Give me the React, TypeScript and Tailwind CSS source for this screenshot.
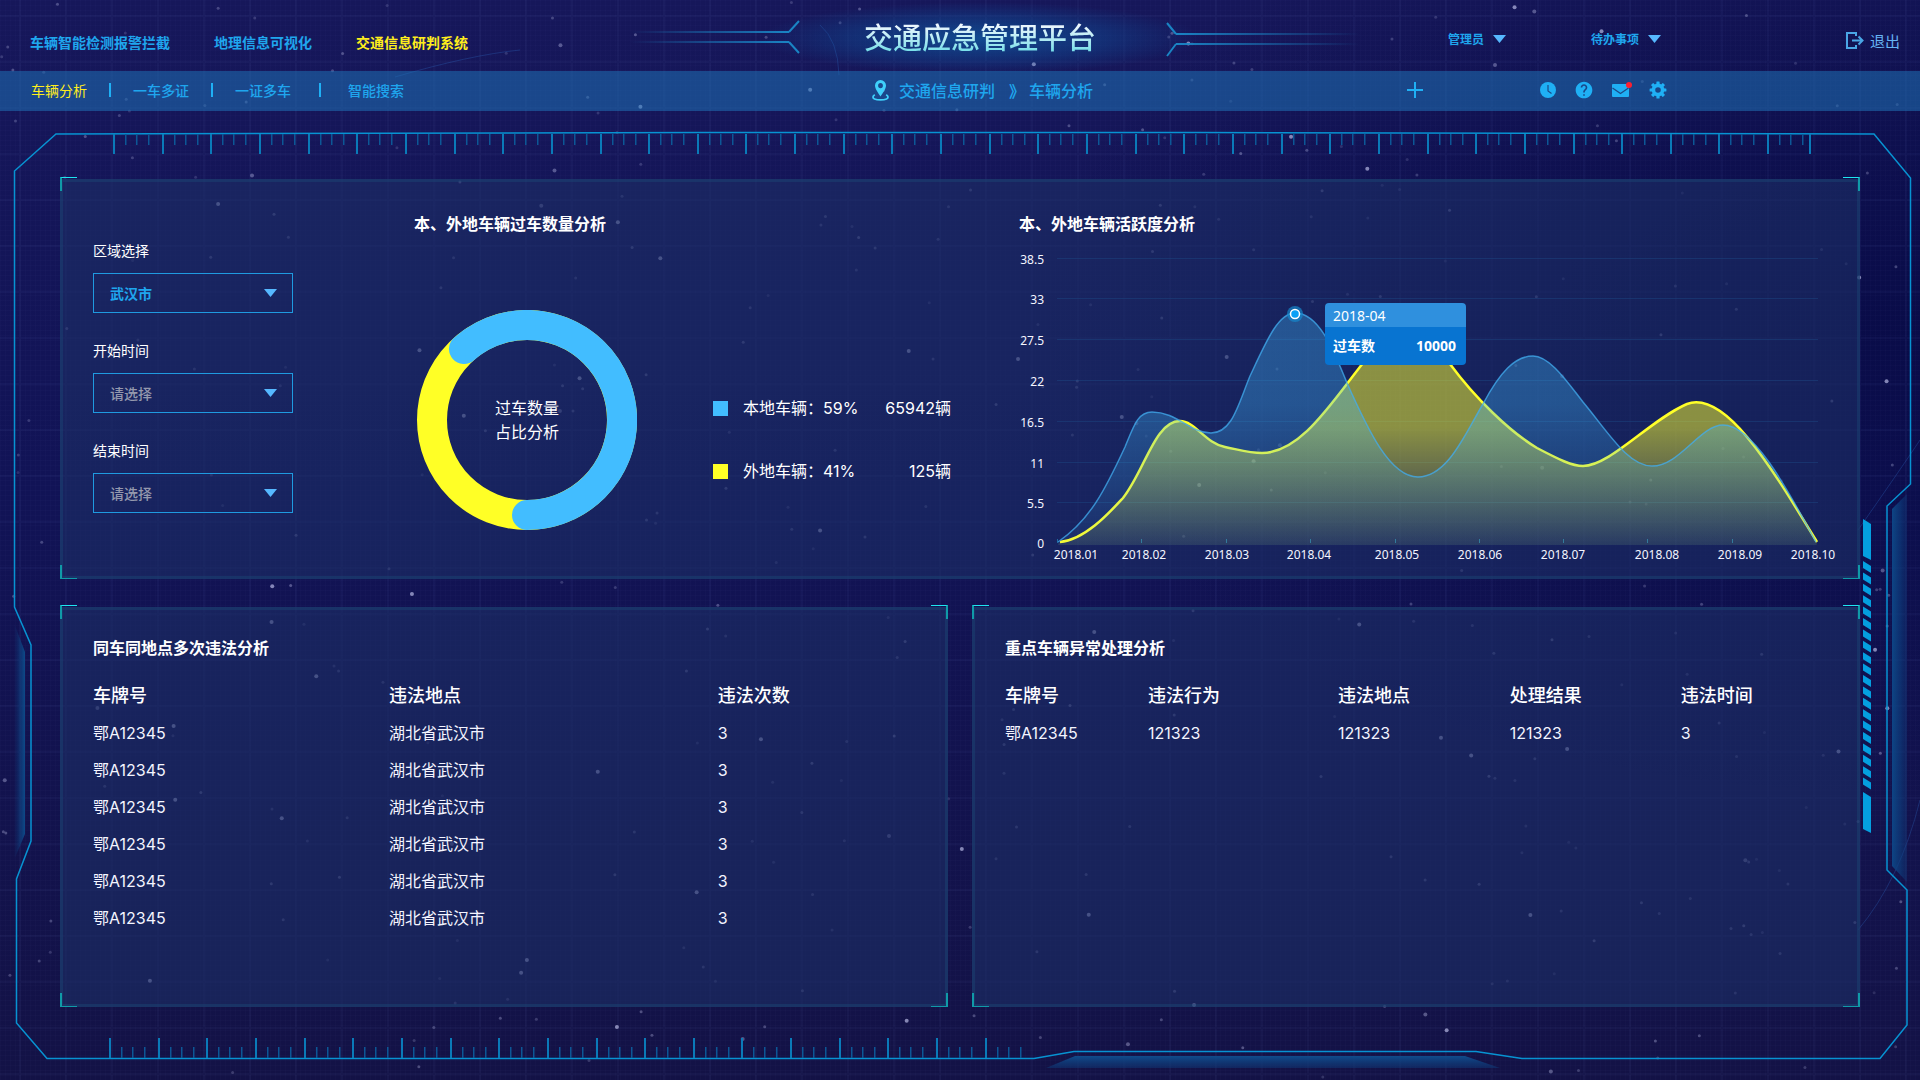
import React from "react";
import { MdHelp } from "react-icons/md";

/* ---------- background ---------- */

type Star = { x: number; y: number; r: number; o: number };

const stars: Star[] = (() => {
  let seed = 20180401;
  const next = () => {
    seed = (seed * 1664525 + 1013904223) % 4294967296;
    return seed / 4294967296;
  };
  return Array.from({ length: 420 }, () => {
    const x = next() * 1920;
    const y = next() * 1080;
    const k = next();
    return { x, y, r: k > 0.8 ? 2 : 1.5, o: k > 0.85 ? 0.65 : 0.15 + k * 0.28 };
  });
})();

const range = (n: number) => Array.from({ length: n }, (_, i) => i);

function Ticks({ x0, groups, base, dir, tail }: { x0: number; groups: number; base: number; dir: number; tail?: number }) {
  const long = range(groups).map((i) => x0 + Math.round(i * 48.65));
  return (
    <g>
      {long.map((x) => (
        <g key={x}>
          <rect x={x - 1} y={dir > 0 ? base : base - 20} width="2" height="20" fill="#0a7ab8" />
          {[12, 23, 35].map((d) => (
            <rect key={d} x={x + d - 1} y={dir > 0 ? base : base - 11} width="1.5" height="11" fill="#0c5796" />
          ))}
        </g>
      ))}
      {tail ? <rect x={tail - 1} y={base} width="2" height="20" fill="#0a7ab8" /> : null}
    </g>
  );
}

function Backdrop() {
  return (
    <svg
      aria-hidden="true"
      className="pointer-events-none absolute inset-0 h-full w-full"
      viewBox="0 0 1920 1080"
      preserveAspectRatio="none"
    >
      <defs>
        <linearGradient id="sky" x1="0" y1="0" x2="0" y2="1">
          <stop offset="0" stopColor="#16175a" />
          <stop offset="0.45" stopColor="#111356" />
          <stop offset="1" stopColor="#131246" />
        </linearGradient>
        <radialGradient id="shade" cx="0.98" cy="0.3" r="0.45">
          <stop offset="0" stopColor="#050842" stopOpacity="0.7" />
          <stop offset="1" stopColor="#050842" stopOpacity="0" />
        </radialGradient>
        <pattern id="grid" x="19" y="15" width="46" height="46" patternUnits="userSpaceOnUse">
          <path d="M1 0V46M0 1H46" stroke="#6f86d8" strokeOpacity="0.05" strokeWidth="2" fill="none" />
        </pattern>
        <pattern id="fine" width="5" height="5" patternUnits="userSpaceOnUse">
          <path d="M0.5 0V5M0 0.5H5" stroke="#6f86d8" strokeOpacity="0.025" fill="none" />
        </pattern>
        <radialGradient id="glow">
          <stop offset="0" stopColor="#0f62a8" stopOpacity="0.7" />
          <stop offset="0.6" stopColor="#0f55a0" stopOpacity="0.35" />
          <stop offset="1" stopColor="#0f55a0" stopOpacity="0" />
        </radialGradient>
        <linearGradient id="railL" gradientUnits="userSpaceOnUse" x1="630" y1="0" x2="789" y2="0">
          <stop offset="0" stopColor="#1a80c0" stopOpacity="0" />
          <stop offset="1" stopColor="#1a84c4" />
        </linearGradient>
        <linearGradient id="railR" gradientUnits="userSpaceOnUse" x1="1176" y1="0" x2="1360" y2="0">
          <stop offset="0" stopColor="#1a84c4" />
          <stop offset="1" stopColor="#1a80c0" stopOpacity="0" />
        </linearGradient>
        <linearGradient id="wingR" x1="0" y1="0" x2="1" y2="0">
          <stop offset="0" stopColor="#0d4585" />
          <stop offset="1" stopColor="#0d3f80" stopOpacity="0.3" />
        </linearGradient>
        <linearGradient id="wingL" x1="0" y1="0" x2="1" y2="0">
          <stop offset="0" stopColor="#0d3f80" stopOpacity="0" />
          <stop offset="1" stopColor="#0d4a88" />
        </linearGradient>
        <linearGradient id="wingB" x1="0" y1="0" x2="0" y2="1">
          <stop offset="0" stopColor="#0f4c8c" />
          <stop offset="1" stopColor="#0f3a78" stopOpacity="0.5" />
        </linearGradient>
      </defs>
      <rect width="1920" height="1080" fill="url(#sky)" />
      <rect width="1920" height="1080" fill="url(#shade)" />
      <rect width="1920" height="1080" fill="url(#fine)" />
      <rect width="1920" height="1080" fill="url(#grid)" />
      {stars.map((s, i) => (
        <circle key={i} cx={s.x} cy={s.y} r={s.r} fill="#c3c5ee" opacity={s.o} />
      ))}
      <path
        d="M395 77Q470 55 520 50M1858 530Q1900 470 1920 440M1858 930Q1900 880 1920 800M820 25Q838 40 839 75"
        fill="none"
        stroke="#2a62b8"
        strokeOpacity="0.35"
      />

      <ellipse cx="980" cy="38" rx="220" ry="36" fill="url(#glow)" />
      <path d="M630 31H789V33H630ZM630 41H789V43H630Z" fill="url(#railL)" />
      <path d="M789 32L799 21M789 42L799 53" stroke="#1a84c4" strokeWidth="2" />
      <path d="M1176 33H1360V35H1176ZM1176 43H1360V45H1176Z" fill="url(#railR)" />
      <path d="M1176 34L1167 23M1176 44L1167 56" stroke="#1a84c4" strokeWidth="2" />

      <path
        d="M56 134L700 132.5H1200L1874 134L1910.5 178V484L1887 506V870L1907 890V1025L1880 1058.5H1522L1476 1051.5H1074L1034 1058.5H47L16.5 1023V879L31 841V645L14.5 607V171Z"
        fill="none"
        stroke="#0793d2"
        strokeWidth="1.5"
      />
      <Ticks x0={114} groups={35} base={134} dir={1} tail={1810} />
      <Ticks x0={110} groups={19} base={1058} dir={-1} />

      <path d="M1892 509L1907 494V882L1892 866Z" fill="url(#wingR)" />
      <path d="M14 623L25 652V834L14 860Z" fill="url(#wingL)" />
      <path d="M1046 1068L1075 1056H1465L1500 1068Z" fill="url(#wingB)" />

      <g fill="#049fe0">
        <path d="M1863 519L1871 524V560L1863 556Z" />
        <path d="M1863 792L1871 797V833L1863 829Z" />
        {range(20).map((i) => {
          const y = 561 + i * 11.4;
          return <path key={i} d={`M1863 ${y}l8 5v7l-8 -5z`} />;
        })}
      </g>
    </svg>
  );
}

/* ---------- shared pieces ---------- */

function Caret() {
  return (
    <svg aria-hidden="true" width="13" height="8" viewBox="0 0 13 8">
      <path d="M0 0H13L6.5 8Z" fill="#56b8ff" />
    </svg>
  );
}

function Panel({ children, className }: { children: React.ReactNode; className: string }) {
  return (
    <section className={`relative min-h-[400px] border-[3px] border-[#1b4a78]/40 bg-[#1d2e66]/60 ${className}`}>
      <i className="absolute -left-[3px] -top-[5px] h-3.5 w-[17px] border-l-2 border-t border-l-[#109aa8] border-t-[#1fe6f0]" />
      <i className="absolute -right-[3px] -top-[5px] h-3.5 w-[17px] border-r-2 border-t border-r-[#109aa8] border-t-[#1fe6f0]" />
      <i className="absolute -bottom-[3px] -left-[3px] h-3.5 w-[17px] border-b border-l-2 border-[#109aa8]" />
      <i className="absolute -bottom-[3px] -right-[3px] h-3.5 w-[17px] border-b border-r-2 border-[#109aa8]" />
      {children}
    </section>
  );
}

/* ---------- header ---------- */

function Header() {
  return (
    <header className="relative">
      <div className="grid h-[71px] grid-cols-[865fr_230fr_825fr] items-center">
        <nav aria-label="系统" className="flex gap-11 pl-[30px] pt-3 text-sm font-bold text-[#1fa6ee]">
          <a href="#detect">车辆智能检测报警拦截</a>
          <a href="#gis">地理信息可视化</a>
          <a href="#judge" aria-current="page" className="text-[#ffee1c]">
            交通信息研判系统
          </a>
        </nav>
        <h1 className="whitespace-nowrap bg-gradient-to-b from-[#f2f8ff] from-20% to-[#7be0ea] to-85% bg-clip-text text-[29px] font-medium leading-10 text-transparent">
          交通应急管理平台
        </h1>
        <div className="flex items-center gap-[85px] pl-88 pr-5 pt-2 text-xs font-bold text-[#1fa6ee]">
          <button type="button" className="flex items-center gap-[9px]">
            管理员
            <Caret />
          </button>
          <button type="button" className="flex items-center gap-[9px]">
            待办事项
            <Caret />
          </button>
          <button type="button" className="ml-auto flex items-center gap-1.5 pt-0.5 text-[15px] font-normal text-[#66b4f4]">
            <svg aria-hidden="true" width="18" height="17" viewBox="0 0 18 17" fill="none" stroke="#4aa6e6" strokeWidth="2">
              <path d="M10 4V1H1V16H10V13M6 8.5H16.5M12.5 4.5L16.5 8.5L12.5 12.5" />
            </svg>
            退出
          </button>
        </div>
      </div>

      <div className="grid h-10 grid-cols-[865fr_230fr_825fr] items-center bg-[#1f71b4]/55 pb-0.5">
        <nav aria-label="功能" className="grid grid-cols-[102px_102px_113px_auto] justify-start pl-[31px] text-sm text-[#1fa6ee]">
          {["车辆分析", "一车多证", "一证多车", "智能搜索"].map((t, i) => (
            <div key={t} className="flex items-center">
              <a href={`#tab-${i + 1}`} className={i === 0 ? "text-[#ffee1c]" : "font-medium"}>
                {t}
              </a>
              {i < 3 && (
                <span className="flex flex-1 justify-center">
                  <span className="h-3.5 w-0.5 bg-[#1fb0f5]" />
                </span>
              )}
            </div>
          ))}
        </nav>
        <nav aria-label="当前位置" className="flex items-center pl-[7px] text-base font-medium text-[#1fa6ee]">
          <svg aria-hidden="true" width="17" height="21" viewBox="0 0 17 21" className="mr-2.5 shrink-0">
            <path
              fill="#3fd0fb"
              fillRule="evenodd"
              d="M8.5 0A5.5 5.5 0 0 0 3 5.6C3 9 6.5 13.5 8.5 16.5C10.5 13.5 14 9 14 5.6A5.5 5.5 0 0 0 8.5 0ZM8.5 3A2.4 2.6 0 0 1 8.5 8.2A2.4 2.6 0 0 1 8.5 3Z"
            />
            <path
              d="M2.8 14.8C1.5 15.6 1 16.2 1 17C1 18.8 4.5 19.9 8.5 19.9S16 18.8 16 17C16 16.2 15.5 15.6 14.2 14.8"
              fill="none"
              stroke="#3fd0fb"
              strokeWidth="1.8"
            />
          </svg>
          <a href="#judge" className="whitespace-nowrap">
            交通信息研判
          </a>
          <span className="ml-3.5 w-5 font-bold">》</span>
          <a href="#tab-1" className="whitespace-nowrap">
            车辆分析
          </a>
        </nav>
        <div className="flex items-center gap-5 pl-[312px] text-[#1fb0f5]">
          <button type="button" aria-label="新增" className="mr-[97px]">
            <svg width="16" height="16" viewBox="0 0 16 16" stroke="currentColor" strokeWidth="2">
              <path d="M8 0V16M0 8H16" />
            </svg>
          </button>
          <button type="button" aria-label="时间">
            <svg width="16" height="16" viewBox="0 0 16 16">
              <circle cx="8" cy="8" r="8" fill="currentColor" />
              <path d="M8 3V9L11.5 11.5" fill="none" stroke="#1c4a88" strokeWidth="1.2" />
            </svg>
          </button>
          <button type="button" aria-label="帮助">
            <MdHelp className="-m-0.5" size={20} />
          </button>
          <button type="button" aria-label="消息" className="relative">
            <svg width="17" height="13" viewBox="0 0 17 13">
              <rect width="17" height="13" rx="1" fill="currentColor" />
              <path d="M0.5 4L8.5 9.5L16.5 4" fill="none" stroke="#1c4a88" strokeWidth="1.3" />
            </svg>
            <span className="absolute -right-[3px] -top-0.5 size-1.5 rounded-full bg-[#ff1f2f]" />
          </button>
          <button type="button" aria-label="设置">
            <svg width="18" height="18" viewBox="0 0 18 18">
              <path
                fill="currentColor"
                fillRule="evenodd"
                d="M9 2.6A6.4 6.4 0 0 1 9 15.4A6.4 6.4 0 0 1 9 2.6ZM9 6.2A2.8 2.8 0 0 0 9 11.8A2.8 2.8 0 0 0 9 6.2Z"
              />
              {range(8).map((i) => (
                <rect key={i} x="7.4" y="0.6" width="3.2" height="3.4" rx="0.5" fill="currentColor" transform={`rotate(${i * 45} 9 9)`} />
              ))}
            </svg>
          </button>
        </div>
      </div>
    </header>
  );
}

/* ---------- filters ---------- */

function Field({ id, label, options, picked }: { id: string; label: string; options: string[]; picked?: boolean }) {
  return (
    <div className="w-[200px]">
      <label htmlFor={id} className="block text-sm leading-5">
        {label}
      </label>
      <div className="relative mt-[13px]">
        <select
          id={id}
          className={`block h-10 w-full appearance-none border border-[#1f9ae0] bg-transparent pl-4 pr-8 text-sm outline-none ${
            picked ? "font-bold text-[#1fa6ee]" : "font-medium text-[#9498ad]"
          }`}
        >
          {options.map((o) => (
            <option key={o} className="bg-[#19235f]">
              {o}
            </option>
          ))}
        </select>
        <span className="pointer-events-none absolute inset-y-0 right-4 flex items-center">
          <Caret />
        </span>
      </div>
    </div>
  );
}

/* ---------- donut ---------- */

const shares = [
  { name: "本地车辆：", pct: "59%", count: "65942", swatch: "bg-[#42bdff]" },
  { name: "外地车辆：", pct: "41%", count: "125", swatch: "bg-[#ffff26]" },
];

function Donut() {
  return (
    <div className="relative size-[220px] shrink-0">
      <svg viewBox="0 0 220 220" className="size-full" role="img" aria-label="过车数量占比">
        <circle cx="110" cy="110" r="95" fill="none" stroke="#ffff26" strokeWidth="30" />
        <path d="M47 39A95 95 0 1 1 110 205" fill="none" stroke="#42bdff" strokeWidth="30" strokeLinecap="round" />
      </svg>
      <p className="absolute inset-0 flex items-center justify-center pb-0.5 text-center leading-6">
        过车数量
        <br />
        占比分析
      </p>
    </div>
  );
}

/* ---------- activity chart ---------- */

const yAxis: [string, number][] = [
  ["38.5", 259],
  ["33", 299],
  ["27.5", 340],
  ["22", 381],
  ["16.5", 422],
  ["11", 463],
  ["5.5", 503],
  ["0", 543],
];

const xAxis: [string, number, number][] = [
  ["2018.01", 1076, 1057],
  ["2018.02", 1144, 1141],
  ["2018.03", 1227, 1226],
  ["2018.04", 1309, 1310],
  ["2018.05", 1397, 1395],
  ["2018.06", 1480, 1479],
  ["2018.07", 1563, 1563],
  ["2018.08", 1657, 1647],
  ["2018.09", 1740, 1732],
  ["2018.10", 1813, 1817],
];

const localLine =
  "M1058 542C1090 520 1105 490 1125 447C1134 425 1138 412 1152 412C1177 412 1190 433 1211 433C1232 433 1238 405 1250 376C1266 342 1278 313 1295 313C1320 313 1335 354 1347 383C1368 430 1390 477 1418 477C1448 477 1466 432 1483 404C1500 372 1515 356 1533 356C1550 356 1568 383 1583 402C1608 432 1628 466 1652 466C1680 466 1700 425 1723 425C1755 425 1793 500 1816 542";
const outerLine =
  "M1060 542C1085 540 1110 512 1123 498C1145 470 1155 421 1180 421C1195 421 1205 443 1225 447C1240 450 1250 453 1262 453C1300 453 1330 405 1363 363C1395 320 1420 320 1450 364C1475 398 1510 432 1537 448C1560 460 1572 466 1583 466C1610 466 1650 420 1687 404C1725 390 1770 465 1817 542";

function ActivityChart() {
  return (
    <div className="relative mt-[9px]">
      <svg
        viewBox="1019 244 816 326"
        className="block w-full overflow-visible"
        role="img"
        aria-label="本、外地车辆活跃度"
        fontFamily="'Noto Sans', 'Noto Sans CJK SC', sans-serif"
        fontSize="12"
        fill="#f4f6ff"
      >
        <defs>
          <linearGradient id="fillOuter" gradientUnits="userSpaceOnUse" x1="0" y1="330" x2="0" y2="545">
            <stop offset="0" stopColor="#ffff29" stopOpacity="0.5" />
            <stop offset="0.45" stopColor="#ffff29" stopOpacity="0.5" />
            <stop offset="1" stopColor="#ffff29" stopOpacity="0.07" />
          </linearGradient>
          <linearGradient id="fillLocal" gradientUnits="userSpaceOnUse" x1="0" y1="310" x2="0" y2="545">
            <stop offset="0" stopColor="#42beff" stopOpacity="0.32" />
            <stop offset="0.4" stopColor="#42beff" stopOpacity="0.32" />
            <stop offset="1" stopColor="#42beff" stopOpacity="0.06" />
          </linearGradient>
        </defs>
        {yAxis.map(([label, y], i) => (
          <g key={label}>
            {i < 7 && <path d={`M1057 ${y - 0.5}H1818`} stroke="#1d4a84" strokeOpacity="0.45" />}
            <text x="1044" y={y + 5} textAnchor="end">
              {label}
            </text>
          </g>
        ))}
        {xAxis.map(([label, x, tick], i) => (
          <g key={label}>
            {i < 9 && <path d={`M${tick + 0.5} 539V543`} stroke="#1f6aa0" />}
            <text x={x} y="559" textAnchor="middle">
              {label}
            </text>
          </g>
        ))}
        <path d={`${outerLine}V545H1058Z`} fill="url(#fillOuter)" />
        <path d={outerLine} fill="none" stroke="#ffff29" strokeWidth="2.5" />
        <path d={`${localLine}V545H1058Z`} fill="url(#fillLocal)" />
        <path d={localLine} fill="none" stroke="#42aef0" strokeOpacity="0.75" strokeWidth="1.5" />
        <circle cx="1295" cy="314" r="8" fill="#1687cc" fillOpacity="0.7" />
        <circle cx="1295" cy="314" r="4.5" fill="#0aa0f5" stroke="#ffffff" strokeWidth="1.5" />
      </svg>
      <div className="absolute left-[37.5%] top-[18%] w-[141px] overflow-hidden rounded-sm font-['Noto_Sans','Noto_Sans_CJK_SC',sans-serif] text-sm">
        <p className="h-6 bg-[#2f90de] px-2 leading-[26px]">2018-04</p>
        <p className="flex h-[38px] items-center justify-between bg-[#0874d1] pl-2 pr-2.5 font-bold">
          <span>过车数</span>
          <span>10000</span>
        </p>
      </div>
    </div>
  );
}

/* ---------- tables ---------- */

function DataTable({ head, rows, widths }: { head: string[]; rows: string[][]; widths: string[] }) {
  return (
    <table className="mt-[18px] w-full table-fixed text-left font-[Inter,'Noto_Sans_CJK_SC',sans-serif]">
      <thead>
        <tr className="h-[37px] text-lg leading-6">
          {head.map((h, i) => (
            <th key={h} scope="col" className={`p-0 font-medium ${widths[i]}`}>
              {h}
            </th>
          ))}
        </tr>
      </thead>
      <tbody>
        {rows.map((r, n) => (
          <tr key={n} className="h-[37px] text-base leading-6 text-[#f4f5ff]">
            {r.map((c, i) => (
              <td key={i} className="p-0">
                {c}
              </td>
            ))}
          </tr>
        ))}
      </tbody>
    </table>
  );
}

const violations = range(6).map(() => ["鄂A12345", "湖北省武汉市", "3"]);

/* ---------- page ---------- */

export default function App() {
  return (
    <div className="relative min-h-screen bg-[#141450] font-['Noto_Sans_CJK_SC',sans-serif] text-white">
      <Backdrop />
      <Header />
      <main className="relative grid grid-cols-2 gap-x-6 gap-y-7 px-[60px] pb-[73px] pt-[68px]">
        <Panel className="col-span-2 grid grid-cols-[321fr_605fr_816fr] pl-[30px] pr-[22px]">
          <form className="flex flex-col gap-[27px] pt-[58px]">
            <Field id="area" label="区域选择" options={["武汉市"]} picked />
            <Field id="start" label="开始时间" options={["请选择"]} />
            <Field id="end" label="结束时间" options={["请选择"]} />
          </form>
          <div className="pt-[29px]">
            <h2 className="font-bold leading-6">本、外地车辆过车数量分析</h2>
            <div className="mt-[75px] flex items-start gap-[76px] pl-[3px]">
              <Donut />
              <ul className="flex w-[238px] flex-col gap-[39px] pt-[86px] font-[Inter,'Noto_Sans_CJK_SC',sans-serif] leading-6">
                {shares.map((s) => (
                  <li key={s.name} className="flex items-center">
                    <span className={`mr-[15px] size-[15px] ${s.swatch}`} />
                    <span>
                      {s.name}
                      {s.pct}
                    </span>
                    <span className="ml-auto">{s.count}辆</span>
                  </li>
                ))}
              </ul>
            </div>
          </div>
          <div className="pt-[29px]">
            <h2 className="font-bold leading-6">本、外地车辆活跃度分析</h2>
            <ActivityChart />
          </div>
        </Panel>
        <Panel className="px-[30px] pt-[25px]">
          <h2 className="font-bold leading-6">同车同地点多次违法分析</h2>
          <DataTable head={["车牌号", "违法地点", "违法次数"]} rows={violations} widths={["w-[36%]", "w-[40%]", "w-[24%]"]} />
        </Panel>
        <Panel className="px-[30px] pt-[25px]">
          <h2 className="font-bold leading-6">重点车辆异常处理分析</h2>
          <DataTable
            head={["车牌号", "违法行为", "违法地点", "处理结果", "违法时间"]}
            rows={[["鄂A12345", "121323", "121323", "121323", "3"]]}
            widths={["w-[17.4%]", "w-[23.1%]", "w-[20.9%]", "w-[20.8%]", "w-[17.8%]"]}
          />
        </Panel>
      </main>
    </div>
  );
}
